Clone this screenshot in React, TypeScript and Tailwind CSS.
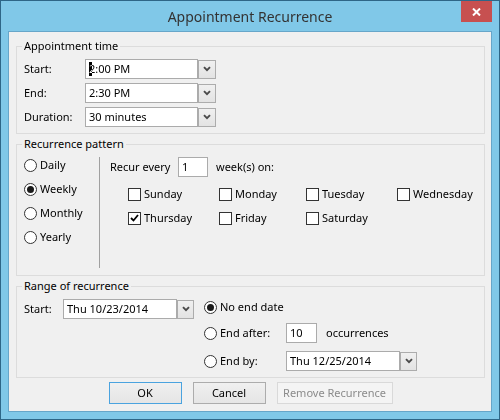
import type { ReactNode } from "react";

const days = [
  ["Sunday", false],
  ["Monday", false],
  ["Tuesday", false],
  ["Wednesday", false],
  ["Thursday", true],
  ["Friday", false],
  ["Saturday", false],
] as const;

function Chevron() {
  return (
    <svg width="8" height="6" viewBox="0 0 8 6">
      <path d="M1 1.2 L4 4.2 L7 1.2" stroke="#4a4a4a" strokeWidth="1.9" fill="none" />
    </svg>
  );
}

function Combo({ value, inputW, btnW, caret }: { value: string; inputW: string; btnW: string; caret?: boolean }) {
  return (
    <div className="flex h-[20px] items-center">
      <div className={`${inputW} flex h-[20px] items-center border border-[#ababab] bg-white pl-[3px]`}>
        {caret ? (
          <span className="relative">
            2
            <span className="absolute left-0 top-[1px] h-[14px] w-[3px] bg-white mix-blend-difference" />
          </span>
        ) : null}
        {caret ? value.slice(1) : value}
      </div>
      <div className={`${btnW} flex h-[19px] items-center justify-center border border-[#acacac] bg-gradient-to-b from-[#f0f0f0] to-[#e3e3e3]`}>
        <Chevron />
      </div>
    </div>
  );
}

function Radio({ checked }: { checked?: boolean }) {
  return (
    <span className="flex h-[13px] w-[13px] shrink-0 items-center justify-center rounded-full border border-[#333] bg-white">
      {checked ? <span className="h-[7px] w-[7px] rounded-full bg-[#1a1a1a]" /> : null}
    </span>
  );
}

function Check({ checked }: { checked?: boolean }) {
  return (
    <span className="flex h-[13px] w-[13px] shrink-0 items-center justify-center border border-[#333] bg-white">
      {checked ? (
        <svg width="9" height="8" viewBox="0 0 9 8">
          <path d="M1 4 L3.5 6.5 L8 1" stroke="#000" strokeWidth="1.8" fill="none" />
        </svg>
      ) : null}
    </span>
  );
}

function Group({ label, className, children }: { label: string; className: string; children: ReactNode }) {
  return (
    <div className={`relative border border-[#dcdcdc] ${className}`}>
      <span className="absolute -top-[9px] left-[5px] bg-[#f0f0f0] px-[2px] leading-[16px]">{label}</span>
      {children}
    </div>
  );
}

function Field({ value, w }: { value: string; w: string }) {
  return (
    <div className={`${w} flex h-[20px] items-center border border-[#ababab] bg-white pl-[3px]`}>{value}</div>
  );
}

export default function App() {
  return (
    <div className="flex h-[420px] w-[500px] flex-col border border-[#2e6687] bg-[#80c8e8] font-['Noto_Sans',sans-serif] text-[11px] text-black">
      <div className="relative flex h-[30px] items-center justify-center">
        <span className="text-[14px] text-[#333]">Appointment Recurrence</span>
        <div className="absolute right-[7px] top-0 flex h-[21px] w-[31px] items-center justify-center bg-[#c75050]">
          <svg width="9" height="8" viewBox="0 0 9 8">
            <path d="M1 0.5 L8 7.5 M8 0.5 L1 7.5" stroke="#fff" strokeWidth="2" />
          </svg>
        </div>
      </div>

      <div className="mx-[7px] mb-[7px] flex-1 border border-[#67a6c9] bg-[#f0f0f0] pl-[7px] pr-[6px] pt-[14px]">
        <Group label="Appointment time" className="h-[88px]">
          <div className="flex flex-col gap-[4px] pl-[7px] pt-[12px]">
            {[
              ["Start:", "2:00 PM"],
              ["End:", "2:30 PM"],
              ["Duration:", "30 minutes"],
            ].map(([label, value], i) => (
              <div key={label} className="flex items-center">
                <span className="w-[61px]">{label}</span>
                <Combo value={value} inputW="w-[113px]" btnW="w-[18px]" caret={i === 0} />
              </div>
            ))}
          </div>
        </Group>

        <Group label="Recurrence pattern" className="mt-[10px] h-[132px]">
          <div className="flex">
            <div className="w-[82px] shrink-0 pl-[7px] pt-[8px]">
              {["Daily", "Weekly", "Monthly", "Yearly"].map((item) => (
                <div key={item} className="flex h-[24px] items-center gap-[3px]">
                  <Radio checked={item === "Weekly"} />
                  {item}
                </div>
              ))}
            </div>
            <div className="mt-[12px] h-[111px] w-px shrink-0 bg-[#a0a0a0]" />
            <div className="pl-[10px] pt-[12px]">
              <div className="flex h-[20px] items-center">
                <span className="w-[68px]">Recur every</span>
                <Field value="1" w="w-[30px]" />
                <span className="ml-[8px]">week(s) on:</span>
              </div>
              <div className="mt-[5px] grid grid-cols-[91px_87px_91px_80px] pl-[18px]">
                {days.map(([day, on]) => (
                  <div key={day} className="flex h-[24px] items-center gap-[3px] whitespace-nowrap">
                    <Check checked={on} />
                    {day}
                  </div>
                ))}
              </div>
            </div>
          </div>
        </Group>

        <Group label="Range of recurrence" className="mt-[10px] h-[92px]">
          <div className="flex pl-[7px]">
            <div className="flex pt-[12px]">
              <span className="flex h-[20px] w-[39px] items-center">Start:</span>
              <Combo value="Thu 10/23/2014" inputW="w-[114px]" btnW="w-[17px]" />
            </div>
            <div className="ml-[10px] pt-[10px]">
              <div className="flex h-[20px] items-center gap-[3px]">
                <Radio checked />
                No end date
              </div>
              <div className="mt-[6px] flex h-[20px] items-center">
                <span className="flex w-[82px] items-center gap-[3px]">
                  <Radio />
                  End after:
                </span>
                <Field value="10" w="w-[31px]" />
                <span className="ml-[9px]">occurrences</span>
              </div>
              <div className="mt-[8px] flex h-[20px] items-center">
                <span className="flex w-[82px] items-center gap-[3px]">
                  <Radio />
                  End by:
                </span>
                <Combo value="Thu 12/25/2014" inputW="w-[114px]" btnW="w-[17px]" />
              </div>
            </div>
          </div>
        </Group>

        <div className="mt-[4px] flex justify-center gap-[11px]">
          <button className="h-[22px] w-[73px] border border-[#4aa3df] bg-gradient-to-b from-[#f0f0f0] to-[#e5e5e5]">OK</button>
          <button className="h-[22px] w-[73px] border border-[#acacac] bg-gradient-to-b from-[#f0f0f0] to-[#e5e5e5]">Cancel</button>
          <button className="h-[22px] w-[116px] border border-[#d9d9d9] bg-[#f4f4f4] text-[#8b8b8b]">Remove Recurrence</button>
        </div>
      </div>
    </div>
  );
}
